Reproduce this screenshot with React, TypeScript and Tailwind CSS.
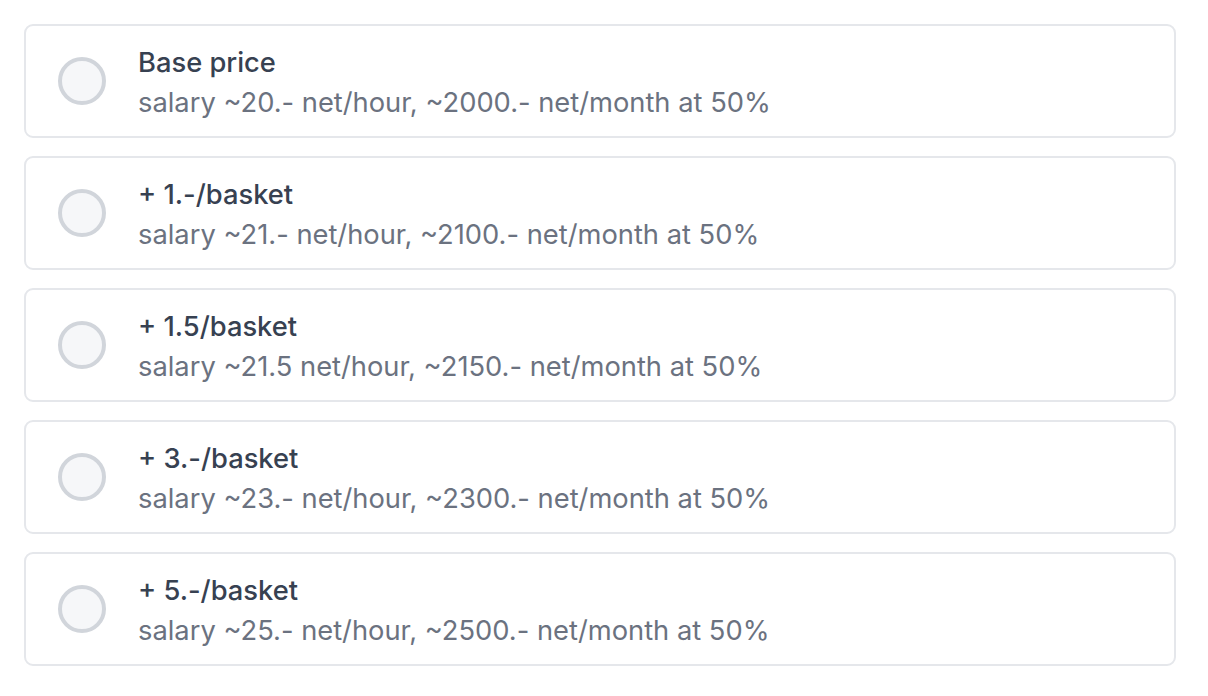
import React from "react";

const options = [
  { title: "Base price", sub: "salary ~20.- net/hour, ~2000.- net/month at 50%" },
  { title: "+ 1.-/basket", sub: "salary ~21.- net/hour, ~2100.- net/month at 50%" },
  { title: "+ 1.5/basket", sub: "salary ~21.5 net/hour, ~2150.- net/month at 50%" },
  { title: "+ 3.-/basket", sub: "salary ~23.- net/hour, ~2300.- net/month at 50%" },
  { title: "+ 5.-/basket", sub: "salary ~25.- net/hour, ~2500.- net/month at 50%" },
];

export default function App() {
  return (
    <div
      className="w-[1208px] h-[696px] bg-white px-[24px] pt-[24px] flex flex-col gap-[18px]"
      style={{ fontFamily: "Inter, 'Noto Sans', sans-serif" }}
    >
      {options.map((o) => (
        <label
          key={o.title}
          className="flex items-center w-[1152px] h-[114px] border-2 border-[#e5e7eb] rounded-[9px] pl-[32px] bg-white"
        >
          <span className="w-[48px] h-[48px] rounded-full border-[4px] border-[#d1d5db] bg-[#f6f7f9] shrink-0" />
          <span className="flex flex-col ml-[32px] pt-[4px]">
            <span className="text-[27.3px] leading-[40px] font-medium text-[#374151]">{o.title}</span>
            <span className="text-[27.3px] leading-[40px] text-[#6b7280]">{o.sub}</span>
          </span>
        </label>
      ))}
    </div>
  );
}
